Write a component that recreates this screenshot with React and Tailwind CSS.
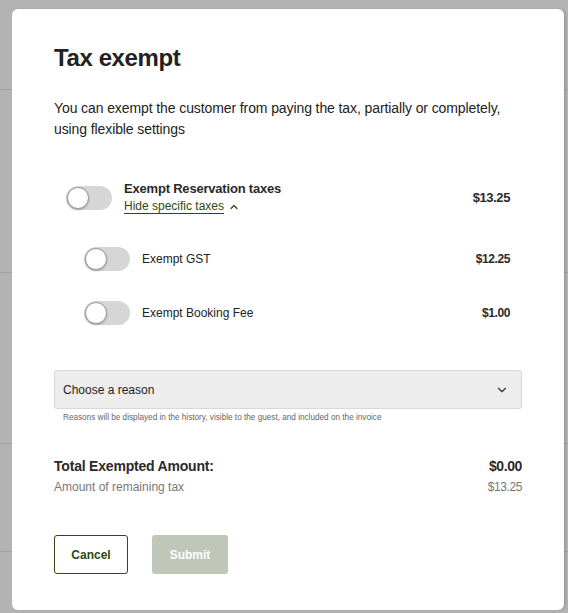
import { ChevronDown, ChevronUp } from 'lucide-react';

function Toggle() {
  return (
    <div className="w-[46px] h-[24px] rounded-full bg-[#d6d6d6] flex items-center px-px shrink-0">
      <div className="w-[22px] h-[22px] rounded-full bg-white border border-[#9a9a9a] shadow-[0_1px_2px_rgba(0,0,0,0.25)]" />
    </div>
  );
}

function SubRow({ label, amount }) {
  return (
    <div className="flex items-center pl-[30px] pr-3 h-[24px]">
      <Toggle />
      <span className="ml-3 text-[12px] text-[#222]">{label}</span>
      <span className="ml-auto text-[12px] font-bold text-[#2a2a2a] tracking-[-0.4px]">{amount}</span>
    </div>
  );
}

export default function App() {
  return (
    <div className="relative w-[568px] h-[613px] bg-[#b3b3b3] overflow-hidden font-['Liberation_Sans',Arial,sans-serif]">
      {/* page behind the overlay */}
      <div className="flex flex-col">
        <div className="h-[90px] border-b border-[#a2a2a2]" />
        <div className="h-[183px] border-b border-[#a2a2a2]" />
        <div className="h-[171px] border-b border-[#a2a2a2]" />
        <div className="h-[108px] border-b border-[#a2a2a2]" />
      </div>

      {/* Modal */}
      <div className="absolute left-[12px] top-[9px] w-[552px] h-[601px] bg-white rounded-[6px] shadow-[2px_0_2px_rgba(0,0,0,0.12)] px-[42px] pt-[34px]">
        <h2 className="text-[24px] font-bold text-[#222] tracking-[-0.4px] leading-[30px]">Tax exempt</h2>

        <p className="mt-[25px] text-[14px] leading-[21px] text-[#222] tracking-[-0.1px]">
          You can exempt the customer from paying the tax, partially or completely, using flexible settings
        </p>

        {/* Reservation taxes */}
        <div className="mt-[40px] flex items-center pl-3 pr-3">
          <Toggle />
          <div className="ml-3 flex flex-col">
            <span className="text-[13px] font-bold text-[#2a2a2a] leading-[18px] tracking-[-0.2px]">Exempt Reservation taxes</span>
            <span className="flex items-center gap-1 text-[12px] text-[#2d4a14] leading-[17px]">
              <span className="underline underline-offset-[3px]">Hide specific taxes</span>
              <ChevronUp size={12} strokeWidth={2.5} />
            </span>
          </div>
          <span className="ml-auto text-[13px] font-bold text-[#2a2a2a] tracking-[-0.4px]">$13.25</span>
        </div>

        <div className="mt-[32px] flex flex-col gap-[30px]">
          <SubRow label="Exempt GST" amount="$12.25" />
          <SubRow label="Exempt Booking Fee" amount="$1.00" />
        </div>

        {/* Reason select */}
        <div className="mt-[45px] h-[39px] bg-[#ededed] border border-[#d9d9d9] rounded-[3px] flex items-center px-[8px]">
          <span className="text-[12px] text-[#222]">Choose a reason</span>
          <ChevronDown size={14} strokeWidth={2} className="ml-auto mr-[4px] text-[#333]" />
        </div>
        <p className="mt-[3px] ml-[9px] text-[8.2px] text-[#666] leading-[12px]">
          Reasons will be displayed in the history, visible to the guest, and included on the invoice
        </p>

        {/* Totals */}
        <div className="mt-[32px] flex items-center justify-between">
          <span className="text-[14px] font-bold text-[#2a2a2a] tracking-[-0.2px]">Total Exempted Amount:</span>
          <span className="text-[14px] font-bold text-[#2a2a2a] tracking-[-0.4px]">$0.00</span>
        </div>
        <div className="flex items-center justify-between mt-[1px]">
          <span className="text-[12px] text-[#777]">Amount of remaining tax</span>
          <span className="text-[12px] text-[#777] tracking-[-0.4px]">$13.25</span>
        </div>

        {/* Actions */}
        <div className="mt-[39px] flex gap-6">
          <button className="w-[74px] h-[39px] border border-[#2d4a14] rounded-[3px] text-[12px] font-bold text-[#2d4a14] bg-white">
            Cancel
          </button>
          <button className="w-[76px] h-[39px] rounded-[3px] text-[12px] font-bold text-white bg-[#bec7b8]">
            Submit
          </button>
        </div>
      </div>
    </div>
  );
}
